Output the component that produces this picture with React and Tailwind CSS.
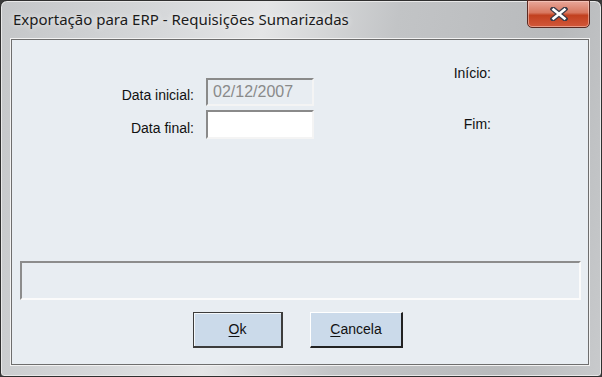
import React from 'react';

const sans = "font-['Liberation_Sans',Arial,sans-serif]";

const App = () => {
  return (
    <div className="w-[602px] h-[377px] bg-[#3a3a3a] overflow-hidden">
      <div className="relative w-[602px] h-[377px] rounded-t-[7px] rounded-b-[4px] border border-[#2f2f2f] bg-[linear-gradient(100deg,#c4c6c8_0%,#d6d8da_25%,#e4e5e6_40%,#c2c4c6_60%,#b8babc_85%,#c8cacc_100%)] shadow-[inset_0_0_0_1px_#e8e8e8] flex flex-col pt-[38px] pl-[10px] pr-[12px] pb-[11px]">
        {/* title */}
        <div className="absolute left-[12px] top-[8px] text-[15px] leading-[20px] text-[#1b1b1b] font-['Noto_Sans',sans-serif] [text-shadow:0_0_6px_#ffffff]">
          Exportação para ERP - Requisições Sumarizadas
        </div>
        <button className="absolute left-[526px] top-[-1px] w-[63px] h-[28px] rounded-b-[5px] border border-[#5a2a22] bg-[linear-gradient(180deg,#e8a79a_0%,#d8775f_45%,#c2401f_55%,#d2583a_100%)] shadow-[inset_0_0_0_1px_rgba(255,220,210,0.5)] flex items-center justify-center">
          <svg width="18" height="14" viewBox="0 0 18 14">
            <path d="M3 2 L15 12 M15 2 L3 12" stroke="#3b3b48" strokeWidth="5" strokeLinecap="square" />
            <path d="M3.5 2.5 L14.5 11.5 M14.5 2.5 L3.5 11.5" stroke="#ffffff" strokeWidth="2.6" strokeLinecap="square" />
          </svg>
        </button>

        {/* panel */}
        <div className={`flex-1 bg-[#e8edf2] border border-[#6e6e6e] shadow-[0_0_0_1px_#f2f2f2] flex flex-col ${sans} text-[14px] text-[#111]`}>
          <div className="flex h-[221px]">
            <div className="flex flex-col pt-[38px] gap-[4px]">
              <div className="flex items-center gap-[12px]">
                <span className="w-[182px] text-right leading-[16px] pt-[6px]">Data inicial:</span>
                <div className="w-[108px] h-[28px] border-2 border-t-[#8a8a8a] border-l-[#8a8a8a] border-b-[#f4f4f4] border-r-[#f4f4f4] bg-[#e8edf2] text-[16px] text-[#8a8a8a] pl-[5px] leading-[24px]">
                  02/12/2007
                </div>
              </div>
              <div className="flex items-center gap-[12px]">
                <span className="w-[182px] text-right leading-[16px] pt-[6px]">Data final:</span>
                <div className="w-[108px] h-[29px] border-2 border-t-[#8a8a8a] border-l-[#8a8a8a] border-b-[#f4f4f4] border-r-[#f4f4f4] bg-white" />
              </div>
            </div>
            <div className="ml-[117px] w-[60px] flex flex-col items-end pt-[25px] gap-[35px] leading-[16px]">
              <span>Início:</span>
              <span>Fim:</span>
            </div>
          </div>
          <div className="ml-[8px] w-[561px] h-[39px] border-2 border-t-[#8c8c8c] border-l-[#8c8c8c] border-b-[#fbfbfb] border-r-[#fbfbfb]" />
          <div className="flex pl-[181px] pt-[12px] gap-[27px]">
            <button className="w-[90px] h-[36px] bg-[#cbdaea] border border-[#3c3c3c] border-b-2 border-r-2 shadow-[inset_1px_1px_0_#f4f8fb] text-[14px] text-[#111]">
              <span className="underline underline-offset-2">O</span>k
            </button>
            <button className="w-[93px] h-[36px] bg-[#cbdaea] border border-t-white border-l-white border-b-[#222] border-r-[#222] border-b-2 border-r-2 text-[14px] text-[#111]">
              <span className="underline underline-offset-2">C</span>ancela
            </button>
          </div>
        </div>
      </div>
    </div>
  );
};

export default App;
